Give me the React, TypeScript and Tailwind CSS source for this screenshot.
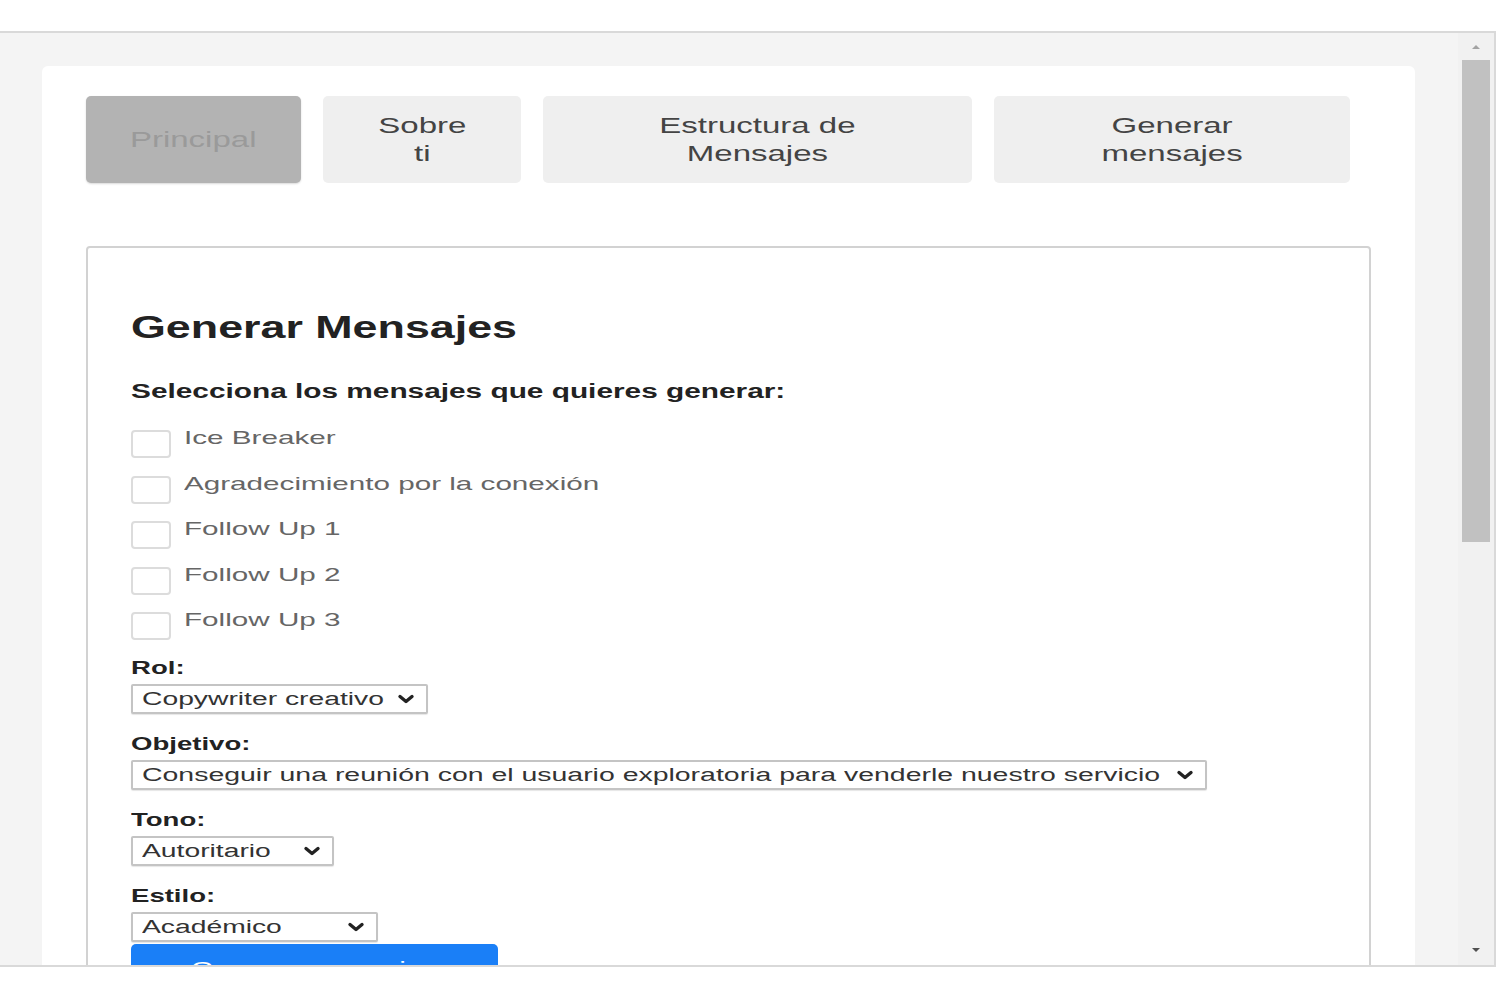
import React from "react";

const font = { fontFamily: '"Liberation Sans", Arial, sans-serif' };

function Chevron({ className = "" }: { className?: string }) {
  return (
    <svg width="18" height="10" viewBox="0 0 18 10" className={className}>
      <path d="M3 2.5 L9 7.5 L15 2.5" fill="none" stroke="#222" strokeWidth="3.4" strokeLinecap="round" strokeLinejoin="round" />
    </svg>
  );
}

function Select({ text, width, scale }: { text: string; width: string; scale: string }) {
  return (
    <div
      className={`${width} mt-[5px] h-[30px] border-2 border-[#c4c4c4] rounded-[2px] bg-white flex items-center justify-between pl-[9px] pr-[11px] shadow-[0_1px_1px_rgba(0,0,0,0.1)]`}
    >
      <span className={`inline-block origin-left ${scale} text-[18px] leading-[22px] text-[#333] whitespace-nowrap`}>{text}</span>
      <Chevron className="shrink-0" />
    </div>
  );
}

function Label({ text, first }: { text: string; first?: boolean }) {
  return (
    <div className={`${first ? "mt-[17px]" : "mt-[19px]"} text-[19px] leading-[22px] font-bold text-[#222]`}>
      <span className="inline-block origin-left scale-x-[1.45]">{text}</span>
    </div>
  );
}

const checks = ["Ice Breaker", "Agradecimiento por la conexión", "Follow Up 1", "Follow Up 2", "Follow Up 3"];

function Tab({ children, active, width }: { children: React.ReactNode; active?: boolean; width: string }) {
  return (
    <div
      className={`${width} h-[87px] rounded-[5px] flex items-center justify-center text-center text-[22px] leading-[28px] ${
        active ? "bg-[#b3b3b3] text-[#9a9a9a] shadow-[0_1px_2px_rgba(0,0,0,0.15)]" : "bg-[#efefef] text-[#444]"
      }`}
    >
      <span className="inline-block scale-x-[1.5] whitespace-nowrap">{children}</span>
    </div>
  );
}

export default function App() {
  return (
    <div className="w-[1500px] h-[1000px] bg-white overflow-hidden pt-[31px]" style={font}>
      <div className="w-[1496px] h-[936px] border-t-2 border-b-2 border-r-2 border-[#d9d9d9] bg-[#f4f4f4] flex overflow-hidden">
        {/* content */}
        <div className="flex-1 overflow-hidden pt-[33px] pl-[42px] pr-[43px]">
          <div className="bg-white rounded-[6px] pt-[30px] pl-[44px] pr-[43px] h-[1000px]">
            {/* tabs */}
            <div className="flex gap-[22px]">
              <Tab active width="w-[215px]">Principal</Tab>
              <Tab width="w-[198px]">
                Sobre
                <br />
                ti
              </Tab>
              <Tab width="w-[429px]">
                Estructura de
                <br />
                Mensajes
              </Tab>
              <Tab width="w-[356px]">
                Generar
                <br />
                mensajes
              </Tab>
            </div>

            {/* inner box */}
            <div className="mt-[63px] w-[1285px] border-2 border-[#d2d2d2] rounded-t-[4px] pl-[43px] pt-[60px] h-[800px]">
              <h1 className="text-[32px] leading-[38px] font-bold text-[#222]">
                <span className="inline-block origin-left scale-x-[1.4]">Generar Mensajes</span>
              </h1>
              <div className="mt-[33px] text-[20px] leading-[24px] font-bold text-[#222]">
                <span className="inline-block origin-left scale-x-[1.49]">Selecciona los mensajes que quieres generar:</span>
              </div>
              <div className="mt-[27px] flex flex-col gap-[17.5px]">
                {checks.map((c) => (
                  <div key={c} className="flex items-start h-[28px]">
                    <div className="w-[40px] h-[28px] rounded-[4px] border-2 border-[#dcdcdc] bg-white shrink-0" />
                    <span className="ml-[13px] -mt-[3px] text-[19px] leading-[22px] text-[#666] whitespace-nowrap inline-block origin-left scale-x-[1.56]">
                      {c}
                    </span>
                  </div>
                ))}
              </div>

              <Label text="Rol:" first />
              <Select text="Copywriter creativo" width="w-[297px]" scale="scale-x-[1.57]" />
              <Label text="Objetivo:" />
              <Select
                text="Conseguir una reunión con el usuario exploratoria para venderle nuestro servicio"
                width="w-[1076px]"
                scale="scale-x-[1.58]"
              />
              <Label text="Tono:" />
              <Select text="Autoritario" width="w-[203px]" scale="scale-x-[1.57]" />
              <Label text="Estilo:" />
              <Select text="Académico" width="w-[247px]" scale="scale-x-[1.57]" />

              <div className="mt-[2px] w-[367px] h-[50px] rounded-t-[5px] bg-[#1a7ff7] flex items-center justify-center text-[20px] text-white">
                <span className="inline-block scale-x-[1.5]">Generar mensajes</span>
              </div>
            </div>
          </div>
        </div>

        {/* scrollbar */}
        <div className="w-[36px] bg-[#f1f1f1] flex flex-col items-center shrink-0">
          <div className="h-[27px] flex items-center justify-center">
            <svg width="10" height="6" viewBox="0 0 10 6">
              <path d="M1 5 L5 1 L9 5 Z" fill="#a3a3a3" />
            </svg>
          </div>
          <div className="w-[28px] h-[482px] bg-[#c1c1c1]" />
          <div className="flex-1" />
          <div className="h-[30px] flex items-start justify-center pt-[12px]">
            <svg width="10" height="6" viewBox="0 0 10 6">
              <path d="M1 1 L5 5 L9 1 Z" fill="#505050" />
            </svg>
          </div>
        </div>
      </div>
    </div>
  );
}
